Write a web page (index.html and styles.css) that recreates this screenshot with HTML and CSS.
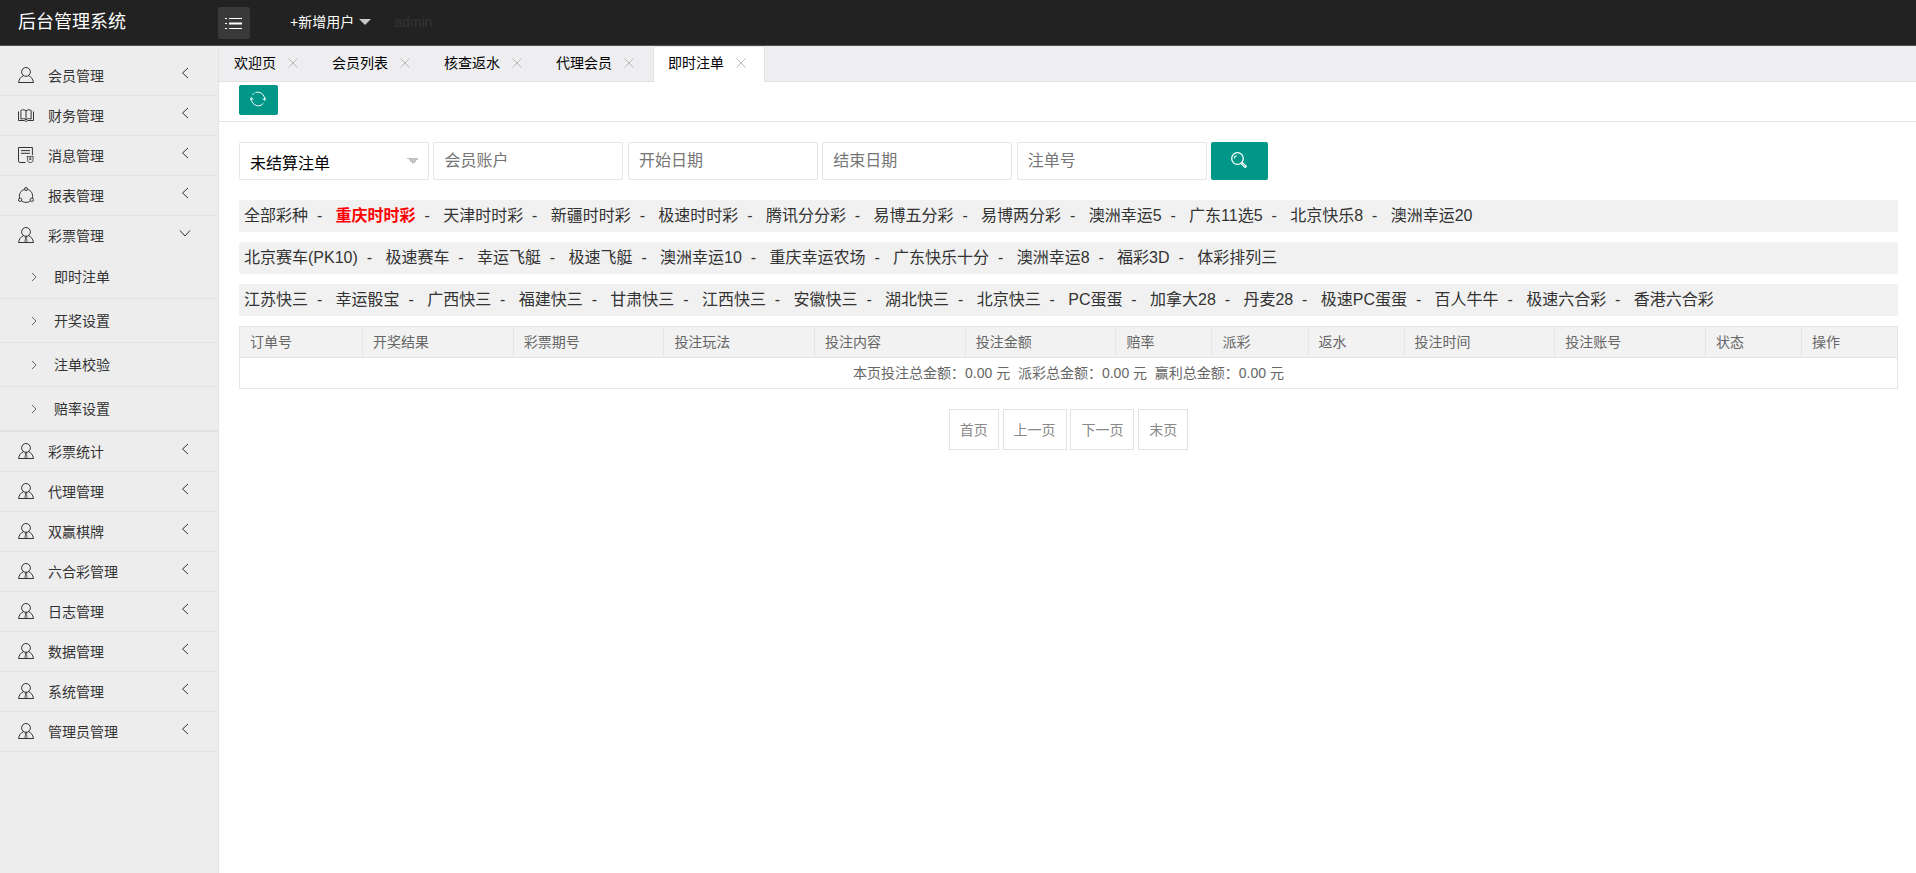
FILE: index.html
```
<!DOCTYPE html>
<html lang="zh-CN">
<head>
<meta charset="utf-8">
<title>后台管理系统</title>
<link rel="stylesheet" href="styles.css">
</head>
<body>
<svg class="sprite" aria-hidden="true">
  <symbol id="user" viewBox="0 0 16 16"><circle cx="8" cy="4.900" r="4.400"/><path d="M5.600 8.600C2.800 9.800 1 12 .5 15.500h15C15 12 13.200 9.800 10.400 8.600"/></symbol>
  <symbol id="agent" viewBox="0 0 16 16"><circle cx="8" cy="4.900" r="4.400"/><path d="M5.600 8.600C2.800 9.800 1 12 .5 15.500h15C15 12 13.200 9.800 10.400 8.600"/><path stroke-width=".8" d="M7 9.800h2l-.6 1.400.8 3.100-1.200 1-1.200-1 .8-3.100z"/></symbol>
  <symbol id="book" viewBox="0 0 16 16"><path d="M8 4C7 2.600 4.500 2.300 2.900 3.500v8.600C4.500 11.300 7 11.500 8 12.800c1-1.300 3.500-1.500 5.100-.7V3.500C11.500 2.300 9 2.600 8 4zv8.800M.5 4.500v9h5.700l1 .7h1.600l1-.7h5.700v-9"/></symbol>
  <symbol id="note" viewBox="0 0 16 16"><path d="M7.500 15.500H2.100A1.600 1.600 0 0 1 .5 13.900V.5h13.900v7.700M3 3.600h9M3 6.300h9"/><path stroke-width=".8" d="M8.600 9.600h6.900M9.600 9.600v4.300l1.200 1.500h3l1.200-1.500V9.600M12.200 9.600v3.500M11 12h2.600"/></symbol>
  <symbol id="share" viewBox="0 0 16 16"><circle cx="8" cy="2" r="1.500"/><circle cx="2.200" cy="12.800" r="1.700"/><circle cx="13.800" cy="12.800" r="1.700"/><path d="M6.400 2.400C3 3.200 .8 6.800 1.500 11.100M9.600 2.400c3.400.8 5.600 4.400 4.900 8.700M3.600 13.900c2.500 2 6.300 2 8.800 0"/></symbol>
  <symbol id="left" viewBox="0 0 16 16"><path d="M11 3L5.500 8l5.500 5"/></symbol>
  <symbol id="down" viewBox="0 0 16 16"><path d="M3 5.500l5 5.500 5-5.500"/></symbol>
  <symbol id="right" viewBox="0 0 12 12"><path d="M4 2l4 4-4 4"/></symbol>
  <symbol id="close" viewBox="0 0 10 10"><path d="M.5.500l9 9M9.500.500l-9 9"/></symbol>
</svg>

<header class="header">
  <a class="logo" href="#">后台管理系统</a>
  <button class="toggle" type="button" aria-label="折叠菜单"><svg viewBox="0 0 18 12"><path d="M4 1.500h13M4 11.500h13M0 1.500h2M0 6.500h2M0 11.500h2"/><path stroke-width="2" d="M4 6.500h13"/></svg></button>
  <nav class="header-nav">
    <a class="add-user" href="#">+新增用户</a>
    <a class="account" href="#">admin</a>
  </nav>
</header>

<div class="layout">
  <nav class="sidebar">
    <ul class="menu">
      <li><a href="#"><svg class="icon"><use href="#user"/></svg>会员管理<svg class="chevron"><use href="#left"/></svg></a></li>
      <li><a href="#"><svg class="icon"><use href="#book"/></svg>财务管理<svg class="chevron"><use href="#left"/></svg></a></li>
      <li><a href="#"><svg class="icon"><use href="#note"/></svg>消息管理<svg class="chevron"><use href="#left"/></svg></a></li>
      <li><a href="#"><svg class="icon"><use href="#share"/></svg>报表管理<svg class="chevron"><use href="#left"/></svg></a></li>
      <li><a href="#"><svg class="icon"><use href="#agent"/></svg>彩票管理<svg class="chevron"><use href="#down"/></svg></a>
        <ul class="submenu">
          <li><a href="#"><svg><use href="#right"/></svg>即时注单</a></li>
          <li><a href="#"><svg><use href="#right"/></svg>开奖设置</a></li>
          <li><a href="#"><svg><use href="#right"/></svg>注单校验</a></li>
          <li><a href="#"><svg><use href="#right"/></svg>赔率设置</a></li>
        </ul>
      </li>
      <li><a href="#"><svg class="icon"><use href="#agent"/></svg>彩票统计<svg class="chevron"><use href="#left"/></svg></a></li>
      <li><a href="#"><svg class="icon"><use href="#agent"/></svg>代理管理<svg class="chevron"><use href="#left"/></svg></a></li>
      <li><a href="#"><svg class="icon"><use href="#agent"/></svg>双赢棋牌<svg class="chevron"><use href="#left"/></svg></a></li>
      <li><a href="#"><svg class="icon"><use href="#agent"/></svg>六合彩管理<svg class="chevron"><use href="#left"/></svg></a></li>
      <li><a href="#"><svg class="icon"><use href="#agent"/></svg>日志管理<svg class="chevron"><use href="#left"/></svg></a></li>
      <li><a href="#"><svg class="icon"><use href="#agent"/></svg>数据管理<svg class="chevron"><use href="#left"/></svg></a></li>
      <li><a href="#"><svg class="icon"><use href="#agent"/></svg>系统管理<svg class="chevron"><use href="#left"/></svg></a></li>
      <li><a href="#"><svg class="icon"><use href="#agent"/></svg>管理员管理<svg class="chevron"><use href="#left"/></svg></a></li>
    </ul>
  </nav>

  <main class="main">
    <ul class="tabs">
      <li><a href="#">欢迎页</a><button type="button" aria-label="关闭"><svg><use href="#close"/></svg></button></li>
      <li><a href="#">会员列表</a><button type="button" aria-label="关闭"><svg><use href="#close"/></svg></button></li>
      <li><a href="#">核查返水</a><button type="button" aria-label="关闭"><svg><use href="#close"/></svg></button></li>
      <li><a href="#">代理会员</a><button type="button" aria-label="关闭"><svg><use href="#close"/></svg></button></li>
      <li class="active"><a href="#">即时注单</a><button type="button" aria-label="关闭"><svg><use href="#close"/></svg></button></li>
    </ul>
    <div class="toolbar">
      <button class="btn btn-small" type="button" aria-label="刷新"><svg viewBox="0 0 16 16"><path d="M5.500 1.500A7 7 0 0 1 14.600 8.500M13.400 12.200A7 7 0 0 1 10 14.600M10.500 14.500A7 7 0 0 1 1.400 7.500M2.600 3.800A7 7 0 0 1 4.500 2M12.700 7.500l1.900 2 1.200-2.300M.2 8.800l1.200-2.300 1.900 2"/></svg></button>
    </div>
    <div class="content">
      <form class="filters">
        <select aria-label="注单状态"><option>未结算注单</option></select>
        <input type="text" placeholder="会员账户" aria-label="会员账户">
        <input type="text" placeholder="开始日期" aria-label="开始日期">
        <input type="text" placeholder="结束日期" aria-label="结束日期">
        <input type="text" placeholder="注单号" aria-label="注单号">
        <button class="btn btn-search" type="button" aria-label="搜索"><svg viewBox="0 0 16 16"><circle cx="6.500" cy="6.500" r="5.800" stroke-width="1.300"/><path stroke-width="1.200" d="M10.800 10.300l4.600 3.900-1.300 1.400-4.200-4.300M3.400 6.500a3.200 3.200 0 0 1 2.200-3"/></svg></button>
      </form>

      <div class="lotteries"><a href="#">全部彩种</a>&nbsp; -&nbsp;&nbsp; <a class="current" href="#">重庆时时彩</a>&nbsp; -&nbsp;&nbsp; <a href="#">天津时时彩</a>&nbsp; -&nbsp;&nbsp; <a href="#">新疆时时彩</a>&nbsp; -&nbsp;&nbsp; <a href="#">极速时时彩</a>&nbsp; -&nbsp;&nbsp; <a href="#">腾讯分分彩</a>&nbsp; -&nbsp;&nbsp; <a href="#">易博五分彩</a>&nbsp; -&nbsp;&nbsp; <a href="#">易博两分彩</a>&nbsp; -&nbsp;&nbsp; <a href="#">澳洲幸运5</a>&nbsp; -&nbsp;&nbsp; <a href="#">广东11选5</a>&nbsp; -&nbsp;&nbsp; <a href="#">北京快乐8</a>&nbsp; -&nbsp;&nbsp; <a href="#">澳洲幸运20</a></div>
      <div class="lotteries"><a href="#">北京赛车(PK10)</a>&nbsp; -&nbsp;&nbsp; <a href="#">极速赛车</a>&nbsp; -&nbsp;&nbsp; <a href="#">幸运飞艇</a>&nbsp; -&nbsp;&nbsp; <a href="#">极速飞艇</a>&nbsp; -&nbsp;&nbsp; <a href="#">澳洲幸运10</a>&nbsp; -&nbsp;&nbsp; <a href="#">重庆幸运农场</a>&nbsp; -&nbsp;&nbsp; <a href="#">广东快乐十分</a>&nbsp; -&nbsp;&nbsp; <a href="#">澳洲幸运8</a>&nbsp; -&nbsp;&nbsp; <a href="#">福彩3D</a>&nbsp; -&nbsp;&nbsp; <a href="#">体彩排列三</a></div>
      <div class="lotteries"><a href="#">江苏快三</a>&nbsp; -&nbsp;&nbsp; <a href="#">幸运骰宝</a>&nbsp; -&nbsp;&nbsp; <a href="#">广西快三</a>&nbsp; -&nbsp;&nbsp; <a href="#">福建快三</a>&nbsp; -&nbsp;&nbsp; <a href="#">甘肃快三</a>&nbsp; -&nbsp;&nbsp; <a href="#">江西快三</a>&nbsp; -&nbsp;&nbsp; <a href="#">安徽快三</a>&nbsp; -&nbsp;&nbsp; <a href="#">湖北快三</a>&nbsp; -&nbsp;&nbsp; <a href="#">北京快三</a>&nbsp; -&nbsp;&nbsp; <a href="#">PC蛋蛋</a>&nbsp; -&nbsp;&nbsp; <a href="#">加拿大28</a>&nbsp; -&nbsp;&nbsp; <a href="#">丹麦28</a>&nbsp; -&nbsp;&nbsp; <a href="#">极速PC蛋蛋</a>&nbsp; -&nbsp;&nbsp; <a href="#">百人牛牛</a>&nbsp; -&nbsp;&nbsp; <a href="#">极速六合彩</a>&nbsp; -&nbsp;&nbsp; <a href="#">香港六合彩</a></div>

      <table class="orders">
        <colgroup><col class="first"><col class="wide" span="5"><col class="narrow" span="3"><col class="wide" span="2"><col class="narrow" span="2"></colgroup>
        <thead>
          <tr><th>订单号</th><th>开奖结果</th><th>彩票期号</th><th>投注玩法</th><th>投注内容</th><th>投注金额</th><th>赔率</th><th>派彩</th><th>返水</th><th>投注时间</th><th>投注账号</th><th>状态</th><th>操作</th></tr>
        </thead>
        <tbody>
          <tr><td colspan="13">本页投注总金额：0.00 元&nbsp; 派彩总金额：0.00 元&nbsp; 赢利总金额：0.00 元</td></tr>
        </tbody>
      </table>

      <nav class="pager" aria-label="分页">
        <a href="#">首页</a>
        <a href="#">上一页</a>
        <a href="#">下一页</a>
        <a href="#">末页</a>
      </nav>
    </div>
  </main>
</div>
</body>
</html>
```
FILE: styles.css
```
* { box-sizing: border-box; }

body {
  margin: 0;
  min-height: 100vh;
  display: flex;
  flex-direction: column;
  background: #fff;
  color: #000;
  font: 14px/24px "Liberation Sans", "Noto Sans CJK SC", sans-serif;
}

ul { margin: 0; padding: 0; list-style: none; }
a { color: inherit; text-decoration: none; }
button { padding: 0; border: 0; font: inherit; cursor: pointer; }
svg { fill: none; stroke: currentColor; }
.sprite { display: none; }

.header {
  display: flex;
  align-items: center;
  height: 46px;
  background: #222;
  border-bottom: 1px solid #515151;
  color: #fff;
}
.logo { width: 218px; padding: 0 0 2px 18px; font-size: 18px; }
.toggle {
  width: 32px;
  height: 32px;
  display: grid;
  place-items: center;
  border-radius: 2px;
  background: #393939;
  color: #fff;
}
.toggle svg { width: 18px; height: 12px; }
.header-nav { display: flex; gap: 23px; padding: 0 0 2px 40px; }
.add-user { display: flex; align-items: center; gap: 5px; }
.add-user::after {
  content: "";
  border: 6px solid transparent;
  border-top-color: #c8c8c8;
  border-bottom: 0;
}
.account { color: #333; }

.layout { flex: 1; display: flex; }

.sidebar {
  flex: none;
  width: 219px;
  padding-top: 10px;
  background: #ededed;
  border-right: 1px solid #e3e3e3;
  color: #333;
}
.menu > li { border-bottom: 1px solid #e2e2e2; }
.menu > li > a {
  display: flex;
  align-items: center;
  height: 39px;
  padding: 0 25px 0 18px;
}
.icon { width: 16px; height: 16px; margin: 0 14px 1px 0; }
.chevron { width: 16px; height: 16px; margin: 0 0 5px auto; }
.submenu a {
  display: flex;
  align-items: center;
  gap: 14px;
  height: 44px;
  padding-left: 28px;
  border-bottom: 1px solid #e2e2e2;
}
.submenu svg { width: 12px; height: 12px; color: #666; }

.main { flex: 1; min-width: 0; }

.tabs {
  display: flex;
  height: 36px;
  background: #eeeef0;
  border-bottom: 1px solid #e2e2e2;
}
.tabs li {
  display: flex;
  align-items: center;
  height: 36px;
  padding: 0 15px 3px;
}
.tabs .active {
  background: #fff;
  box-shadow: inset 1px 1px #e2e2e2, inset -1px 0 #e2e2e2;
}
.tabs button {
  width: 18px;
  height: 18px;
  margin-left: 8px;
  display: grid;
  place-items: center;
  background: none;
  color: #b8b8b8;
}
.tabs svg { width: 10px; height: 10px; }

.toolbar {
  height: 40px;
  padding: 3px 20px;
  border-bottom: 1px solid #e2e2e2;
}
.btn {
  display: inline-grid;
  place-items: center;
  padding: 0 2px 2px 0;
  border-radius: 2px;
  background: #009688;
  color: #fff;
}
.btn svg { width: 16px; height: 16px; }
.btn-small { width: 39px; height: 30px; }
.btn-search { width: 57px; height: 38px; }

.content { padding: 20px 18px 20px 20px; }

.filters { font-size: 16px; line-height: 38px; }
.filters input,
.filters select,
.filters .btn-search { vertical-align: top; }
.filters input,
.filters select {
  width: 190px;
  height: 38px;
  padding: 0 10px;
  border: 1px solid #e6e6e6;
  border-radius: 2px;
  background: #fff;
  color: #000;
  font: inherit;
}
.filters input { line-height: 24px; }
.filters input::placeholder { color: #757575; }
.filters select {
  padding-top: 2px;
  appearance: none;
  background: linear-gradient(to top left, transparent 50%, #c2c2c2 50%) right 9px center / 6px 6px no-repeat,
    linear-gradient(to top right, transparent 50%, #c2c2c2 50%) right 15px center / 6px 6px no-repeat, #fff;
}

.lotteries {
  margin-top: 10px;
  padding: 4px 5px;
  border-radius: 2px;
  background: #f1f1f1;
  color: #333;
  font-size: 16px;
}
.filters + .lotteries { margin-top: 20px; }
.lotteries .current { color: #f00; font-weight: bold; }

.orders {
  width: 100%;
  margin-top: 10px;
  border-collapse: collapse;
  table-layout: fixed;
  border: 1px solid #e2e2e2;
  color: #666;
}
.orders .first { width: 123px; }
.orders .wide { width: 9.1%; }
.orders .narrow { width: 5.8%; }
.orders th,
.orders td { height: 31px; padding: 3px 10px; border: 1px solid #e6e6e6; line-height: 24px; }
.orders th { background: #f2f2f2; font-weight: normal; text-align: left; }
.orders td { text-align: center; }

.pager { margin-top: 20px; text-align: center; color: #888; }
.pager a {
  display: inline-block;
  padding: 8px 10px 7px;
  border: 1px solid #e2e2e2;
}
```
